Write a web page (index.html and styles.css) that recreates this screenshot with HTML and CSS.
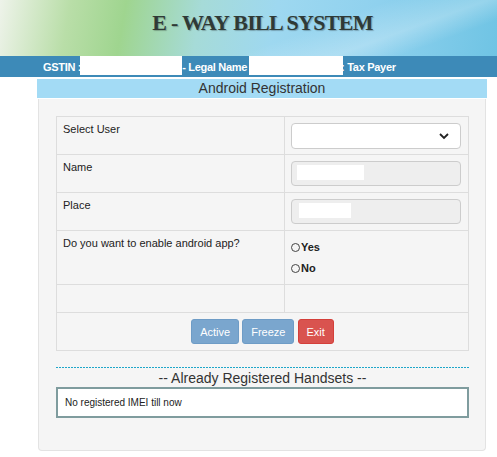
FILE: index.html
```html
<!DOCTYPE html>
<html lang="en">
<head>
    <meta charset="UTF-8">
    <title>Android Registration</title>
    <link rel="stylesheet" href="styles.css">
</head>
<body>
    <div class="banner">
        <h1 class="title">E - Way Bill System</h1>
    </div>
    <div class="userbar">
        <span>GSTIN :</span><span class="mask mask-gstin"></span>
        <span>- Legal Name</span><span class="mask mask-name"></span>
        <span>: Tax Payer</span>
    </div>

    <div class="page">
        <div class="heading">Android Registration</div>
        <div class="panel">
            <table class="form">
                <tr class="row-select">
                    <td class="label">Select User</td>
                    <td class="field">
                        <div class="select">
                            <svg width="12" height="8" viewBox="0 0 12 8"><path d="M2 2 L6 6 L10 2" fill="none" stroke="#222" stroke-width="1.8"/></svg>
                        </div>
                    </td>
                </tr>
                <tr class="row-input">
                    <td class="label">Name</td>
                    <td class="field"><div class="input"><span class="mask mask-in1"></span></div></td>
                </tr>
                <tr class="row-input">
                    <td class="label">Place</td>
                    <td class="field"><div class="input"><span class="mask mask-in2"></span></div></td>
                </tr>
                <tr class="row-radio">
                    <td class="label">Do you want to enable android app?</td>
                    <td class="field">
                        <label class="radio"><span class="dot"></span>Yes</label>
                        <label class="radio"><span class="dot"></span>No</label>
                    </td>
                </tr>
                <tr class="row-empty">
                    <td></td>
                    <td></td>
                </tr>
                <tr class="row-buttons">
                    <td colspan="2">
                        <button class="btn btn-blue">Active</button>
                        <button class="btn btn-blue">Freeze</button>
                        <button class="btn btn-red">Exit</button>
                    </td>
                </tr>
            </table>

            <div class="handsets">
                <div class="rule"></div>
                <div class="sub">-- Already Registered Handsets --</div>
                <div class="imei">No registered IMEI till now</div>
            </div>
        </div>
    </div>
</body>
</html>
```

FILE: styles.css
```css
body{
    margin: 0;
    background: #ffffff;
    font-family: "Liberation Sans", Arial, sans-serif;
    color: #333;
}

.banner{
    height: 56px;
    background:
        linear-gradient(160deg, rgba(255,255,255,0) 60%, rgba(255,255,255,0.25) 75%, rgba(255,255,255,0) 85%),
        linear-gradient(100deg, #eef3ea 0%, #b9dea8 14%, #9fd58f 25%, #a6dbd8 40%, #9ed8f0 55%, #8fd1ee 75%, #6fc4e4 100%);
    display: flex;
    justify-content: center;
    align-items: center;
}
.title{
    margin: 0;
    padding: 0 0 10px 28px;
    font-family: "Liberation Serif", "DejaVu Serif", serif;
    text-transform: uppercase;
    font-weight: bold;
    font-size: 22px;
    letter-spacing: -0.7px;
    color: #2f3a36;
    text-shadow: 1px 1px 1px rgba(0,0,0,0.25);
}

.userbar{
    height: 21px;
    background: #3d8ab8;
    color: #fff;
    font-size: 11px;
    font-weight: bold;
    letter-spacing: -0.3px;
    display: flex;
    align-items: center;
    padding-left: 43px;
}
.userbar .mask{
    background: #fff;
    height: 19px;
    align-self: flex-start;
}
.mask-gstin{ width: 102px; margin-left: -1px; }
.mask-name{ width: 94px; margin-left: 2px; margin-right: -2px; }

.page{
    padding: 2px 10px 0 37px;
}
.heading{
    background: #a3dbf5;
    height: 19px;
    line-height: 19px;
    text-align: center;
    font-size: 14px;
    color: #333;
}
.panel{
    margin: 1px 1px 0 1px;
    height: 352px;
    box-sizing: border-box;
    background: #f5f5f5;
    border: 1px solid #e3e3e3;
    border-top: none;
    border-radius: 0 0 4px 4px;
    padding: 17px 17px 0 17px;
}

.form{
    width: 413px;
    border-collapse: collapse;
    font-size: 11px;
}
.form td{
    border: 1px solid #dddddd;
    vertical-align: top;
    padding: 0;
}
.form .label{
    width: 228px;
    padding: 6px 6px 0 6px;
    box-sizing: border-box;
    color: #222;
}
.form .field{
    padding: 6px 7px 0 6px;
}
.row-select, .row-input{ height: 38px; }
.row-radio{ height: 54px; }
.row-empty{ height: 28px; }
.row-buttons{ height: 38px; }

.select{
    height: 26px;
    box-sizing: border-box;
    background: #fff;
    border: 1px solid #ccc;
    border-radius: 4px;
    display: flex;
    justify-content: flex-end;
    align-items: center;
    padding-right: 10px;
}
.input{
    height: 25px;
    box-sizing: border-box;
    background: #eeeeee;
    border: 1px solid #ccc;
    border-radius: 4px;
    padding: 3px 0 0 5px;
}
.input .mask{
    display: block;
    height: 15px;
    background: #fff;
}
.mask-in1{ width: 67px; }
.mask-in2{ width: 52px; margin-left: 2px; }

.radio{
    display: flex;
    align-items: center;
    font-weight: bold;
    color: #222;
    height: 14px;
    margin-top: 3px;
    margin-bottom: 7px;
}
.dot{
    width: 7px;
    height: 7px;
    border: 1px solid #444;
    border-radius: 50%;
    margin-right: 1px;
}

.row-buttons td{
    text-align: center;
    padding-top: 6px;
}
.btn{
    font-family: "Liberation Sans", Arial, sans-serif;
    font-size: 11px;
    color: #fff;
    border-radius: 3px;
    height: 25px;
    padding: 0 8px;
    margin: 0;
    cursor: pointer;
}
.btn-blue{
    background: #7aa6ce;
    border: 1px solid #6e9cc6;
}
.btn-red{
    background: #d9534f;
    border: 1px solid #d43f3a;
}

.handsets{
    margin-top: 16px;
    width: 413px;
}
.rule{
    height: 1px;
    background: repeating-linear-gradient(90deg, #1ea6c9 0 2px, transparent 2px 3px);
}
.sub{
    text-align: center;
    font-size: 14px;
    color: #333;
    height: 19px;
    line-height: 21px;
}
.imei{
    background: #fff;
    border: 2px solid #7f9c9e;
    height: 27px;
    line-height: 28px;
    padding-left: 7px;
    font-size: 10px;
    color: #222;
}
```
